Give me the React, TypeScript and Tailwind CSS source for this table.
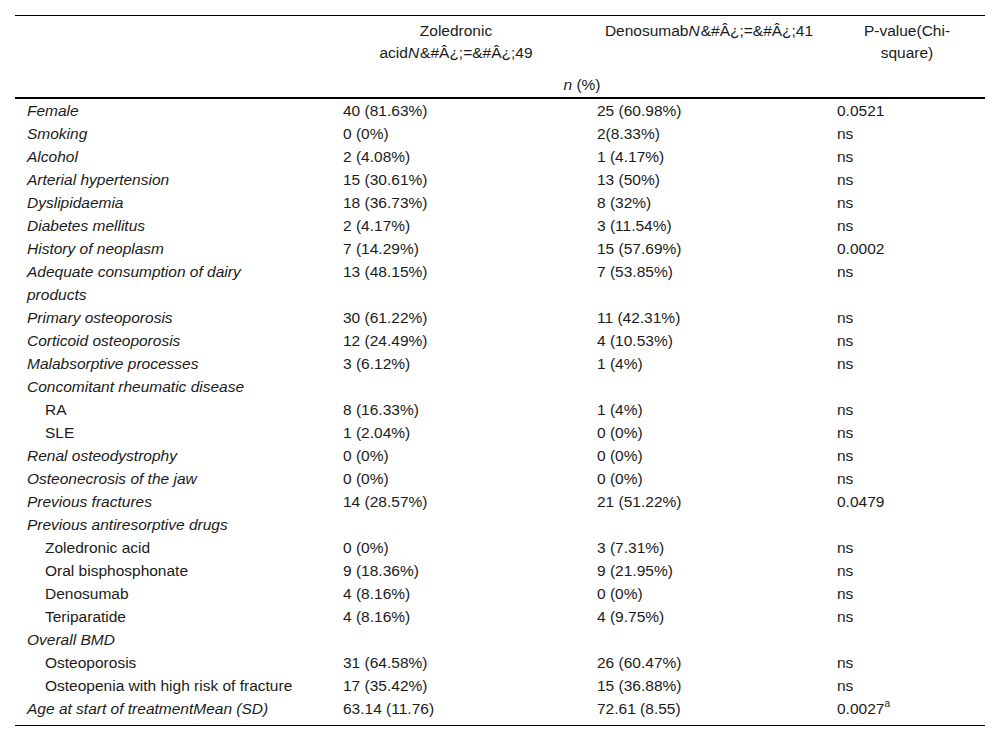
import React from "react";

type Row = { label: string; z?: string; d?: string; p?: React.ReactNode; italic?: boolean; indent?: boolean };

const rows: Row[] = [
  { label: "Female", z: "40 (81.63%)", d: "25 (60.98%)", p: "0.0521", italic: true },
  { label: "Smoking", z: "0 (0%)", d: "2(8.33%)", p: "ns", italic: true },
  { label: "Alcohol", z: "2 (4.08%)", d: "1 (4.17%)", p: "ns", italic: true },
  { label: "Arterial hypertension", z: "15 (30.61%)", d: "13 (50%)", p: "ns", italic: true },
  { label: "Dyslipidaemia", z: "18 (36.73%)", d: "8 (32%)", p: "ns", italic: true },
  { label: "Diabetes mellitus", z: "2 (4.17%)", d: "3 (11.54%)", p: "ns", italic: true },
  { label: "History of neoplasm", z: "7 (14.29%)", d: "15 (57.69%)", p: "0.0002", italic: true },
  { label: "Adequate consumption of dairy products", z: "13 (48.15%)", d: "7 (53.85%)", p: "ns", italic: true },
  { label: "Primary osteoporosis", z: "30 (61.22%)", d: "11 (42.31%)", p: "ns", italic: true },
  { label: "Corticoid osteoporosis", z: "12 (24.49%)", d: "4 (10.53%)", p: "ns", italic: true },
  { label: "Malabsorptive processes", z: "3 (6.12%)", d: "1 (4%)", p: "ns", italic: true },
  { label: "Concomitant rheumatic disease", italic: true },
  { label: "RA", z: "8 (16.33%)", d: "1 (4%)", p: "ns", indent: true },
  { label: "SLE", z: "1 (2.04%)", d: "0 (0%)", p: "ns", indent: true },
  { label: "Renal osteodystrophy", z: "0 (0%)", d: "0 (0%)", p: "ns", italic: true },
  { label: "Osteonecrosis of the jaw", z: "0 (0%)", d: "0 (0%)", p: "ns", italic: true },
  { label: "Previous fractures", z: "14 (28.57%)", d: "21 (51.22%)", p: "0.0479", italic: true },
  { label: "Previous antiresorptive drugs", italic: true },
  { label: "Zoledronic acid", z: "0 (0%)", d: "3 (7.31%)", p: "ns", indent: true },
  { label: "Oral bisphosphonate", z: "9 (18.36%)", d: "9 (21.95%)", p: "ns", indent: true },
  { label: "Denosumab", z: "4 (8.16%)", d: "0 (0%)", p: "ns", indent: true },
  { label: "Teriparatide", z: "4 (8.16%)", d: "4 (9.75%)", p: "ns", indent: true },
  { label: "Overall BMD", italic: true },
  { label: "Osteoporosis", z: "31 (64.58%)", d: "26 (60.47%)", p: "ns", indent: true },
  { label: "Osteopenia with high risk of fracture", z: "17 (35.42%)", d: "15 (36.88%)", p: "ns", indent: true },
  {
    label: "Age at start of treatmentMean (SD)",
    z: "63.14 (11.76)",
    d: "72.61 (8.55)",
    p: (
      <>
        0.0027<sup className="text-[10px] relative -top-[1px] align-super leading-none">a</sup>
      </>
    ),
    italic: true,
  },
];

export default function App() {
  return (
    <div className="w-[1000px] h-[741px] bg-white text-[#1b1b1b] font-['Liberation_Sans',Arial,sans-serif] text-[15.5px]">
      <div className="pt-[15px] px-[15px]">
        <table className="w-[970px] table-fixed border-collapse border-t border-t-black">
          <colgroup>
            <col className="w-[320px]" />
            <col className="w-[242px]" />
            <col className="w-[252px]" />
            <col className="w-[156px]" />
          </colgroup>
          <thead>
            <tr className="leading-[22px]">
              <th className="font-normal pt-[4px]"></th>
              <th className="font-normal text-center align-top pt-[4px] pl-[8px] pr-[8px]">
                Zoledronic acid<i className="pr-[1px]">N</i>&amp;#Â¿;=&amp;#Â¿;49
              </th>
              <th className="font-normal text-center align-top pt-[4px] pl-[20px] pr-[8px]">
                Denosumab<i className="pr-[1px]">N</i>&amp;#Â¿;=&amp;#Â¿;41
              </th>
              <th className="font-normal text-center align-top pt-[4px] pl-[20px] pr-[20px]">
                P-value(Chi-square)
              </th>
            </tr>
            <tr className="leading-[22px] border-b-2 border-b-black">
              <th className="font-normal"></th>
              <th colSpan={2} className="font-normal text-center pt-[10px] pb-[1px] px-[8px]">
                <i>n</i> (%)
              </th>
              <th className="font-normal"></th>
            </tr>
          </thead>
          <tbody>
            {rows.map((r, i) => (
              <tr key={i} className="leading-[23px] align-top">
                <td className={`${r.italic ? "italic" : ""} ${r.indent ? "pl-[30px]" : "pl-[12px]"} pr-[38px]`}>
                  {r.label}
                </td>
                <td className="pl-[8px]">{r.z}</td>
                <td className="pl-[20px]">{r.d}</td>
                <td className="pl-[8px]">{r.p}</td>
              </tr>
            ))}
            <tr className="border-b border-b-black">
              <td colSpan={4} className="h-[5px] p-0"></td>
            </tr>
          </tbody>
        </table>
      </div>
    </div>
  );
}
